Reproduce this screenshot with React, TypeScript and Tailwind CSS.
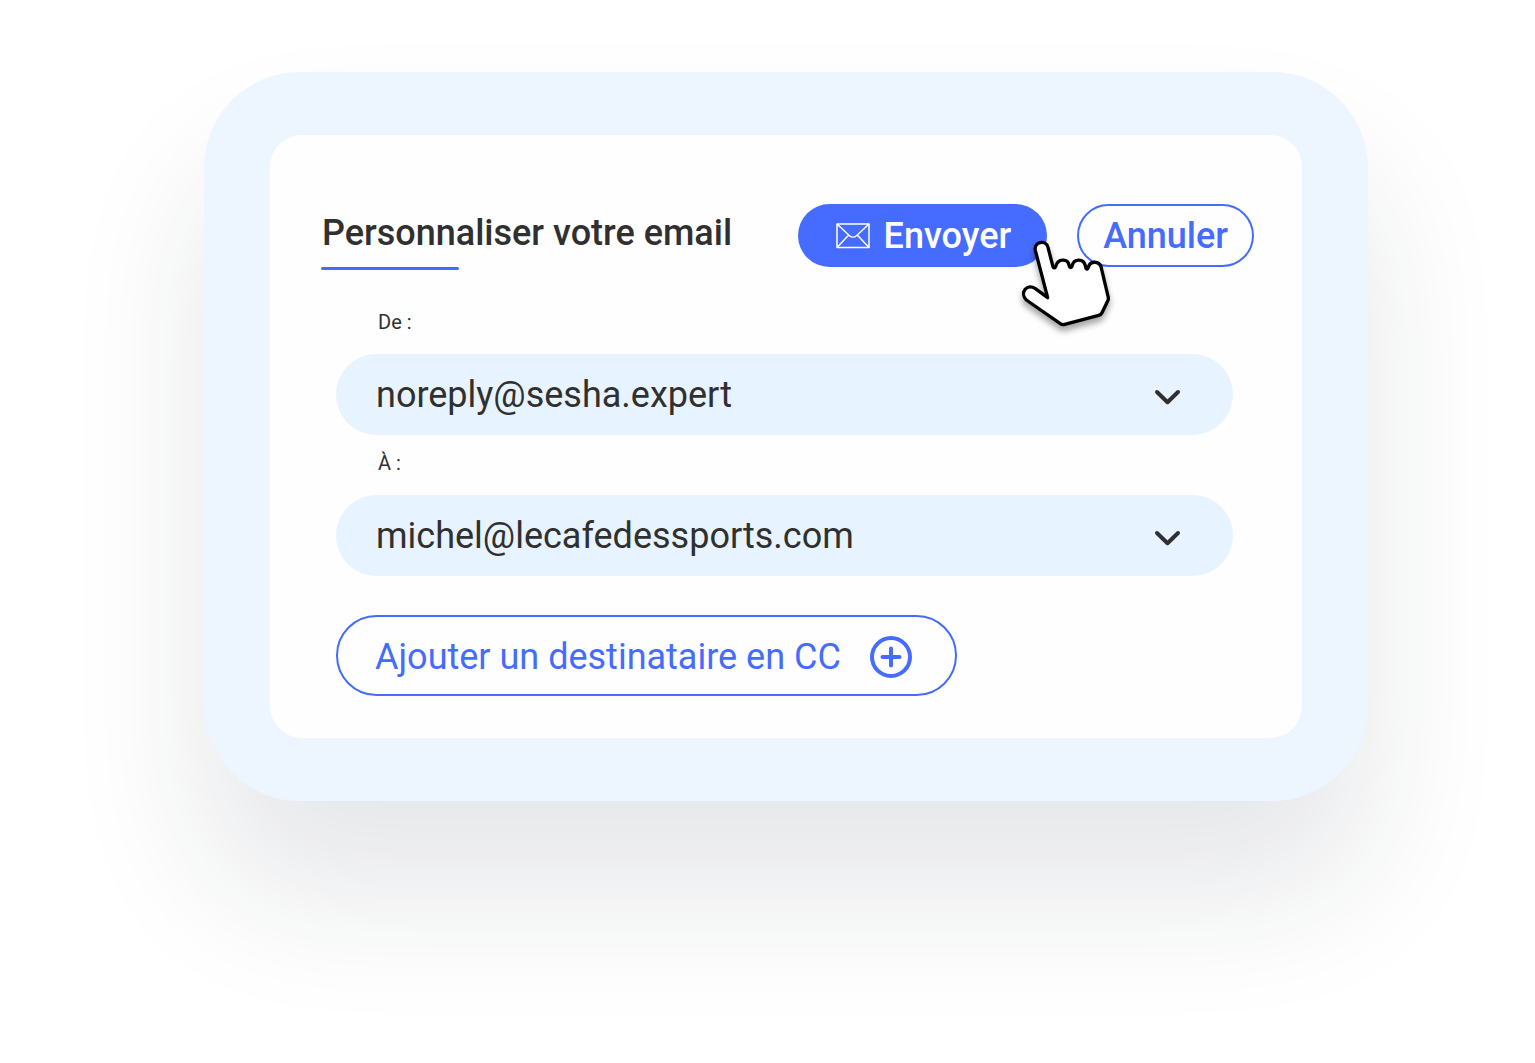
import { useState } from "react";

type SelectFieldProps = {
  id: string;
  label: string;
  options: string[];
};

function MailIcon() {
  return (
    <svg width="34" height="26" viewBox="0 0 34 26" fill="none" stroke="currentColor" strokeWidth="1.5" strokeLinejoin="round" aria-hidden="true">
      <rect x="1" y="1" width="32" height="23.5" />
      <path d="M1 1l12.5 11.7c2 1.8 5 1.8 7 0L33 1M1 24.5l11.5-12.2M33 24.5L21.5 12.3" />
    </svg>
  );
}

function ChevronIcon() {
  return (
    <svg
      className="pointer-events-none absolute right-[52px] top-1/2 -translate-y-1/2"
      width="27"
      height="21"
      viewBox="0 0 27 21"
      fill="none"
      stroke="#303030"
      strokeWidth="4"
      strokeLinecap="round"
      strokeLinejoin="round"
      aria-hidden="true"
    >
      <path d="M3 7.5l10.5 10.2L24 7.5" />
    </svg>
  );
}

function PlusCircleIcon() {
  return (
    <svg width="42" height="42" viewBox="0 0 42 42" fill="none" stroke="currentColor" strokeWidth="4" aria-hidden="true">
      <circle cx="21" cy="21" r="19" />
      <path d="M21 12.5v17M12.5 21h17" strokeLinecap="round" />
    </svg>
  );
}

function HandCursor() {
  return (
    <svg
      className="pointer-events-none absolute right-[139px] top-[31px] drop-shadow-[0_5px_3px_rgba(0,0,0,0.35)]"
      width="100"
      height="100"
      viewBox="0 0 300 300"
      fill="#fff"
      stroke="#000"
      strokeWidth="10"
      strokeLinejoin="round"
      aria-hidden="true"
    >
      <path d="M98 188L61 46C56 19 93 14 99 37L113 92C115 101 120 101 123 92C129 71 158 70 162 90C164 100 170 100 172 90C178 70 206 70 211 92C213 105 218 105 221 94C227 77 252 78 258 95L280 188Q281 193 278 198L261 233Q258 239 251 241L149 268Q142 270 136 266L34 195C14 175 33 145 60 160Z" />
    </svg>
  );
}

function SelectField({ id, label, options }: SelectFieldProps) {
  const [value, setValue] = useState(options[0]);

  return (
    <div>
      <label htmlFor={id} className="block pt-[13px] pb-[17px] pl-[42px] text-xl leading-[30px]">
        {label}
      </label>
      <div className="relative">
        <select
          id={id}
          value={value}
          onChange={e => setValue(e.target.value)}
          className="block h-[81px] w-full appearance-none rounded-full bg-[#e7f3ff] pr-24 pl-10 text-4xl"
        >
          {options.map(option => (
            <option key={option}>{option}</option>
          ))}
        </select>
        <ChevronIcon />
      </div>
    </div>
  );
}

export default function App() {
  return (
    <main className="min-h-screen bg-white pt-[72px] pr-[167px] pb-64 pl-[204px] font-[Roboto,sans-serif] text-[#303030]">
      <div className="rounded-[96px] bg-[#edf5ff] px-[66px] py-[63px] shadow-[0_92px_140px_rgba(24,32,56,0.11)]">
        <section className="rounded-[32px] bg-[#fefefe] pt-[69px] pr-12 pb-[42px] pl-[51px]">
          <header className="relative flex items-start justify-between gap-6">
            <div>
              <h1 className="pt-1 pl-px text-4xl leading-[50px] font-medium whitespace-nowrap">Personnaliser votre email</h1>
              <div className="mt-[9px] h-[3px] w-[138px] rounded-full bg-[#466bff]" />
            </div>
            <div className="flex shrink-0 gap-[30px]">
              <button
                type="button"
                className="flex h-[63px] items-center gap-3.5 rounded-full bg-[#466bff] pr-9 pl-[38px] text-4xl font-medium text-white"
              >
                <MailIcon />
                Envoyer
              </button>
              <button
                type="button"
                className="h-[63px] rounded-full border-2 border-[#466bff] px-6 text-4xl font-medium text-[#466bff]"
              >
                Annuler
              </button>
            </div>
            <HandCursor />
          </header>

          <div className="mt-6 pr-[21px] pl-[15px]">
            <SelectField id="from" label="De :" options={["noreply@sesha.expert"]} />
            <SelectField id="to" label="À :" options={["michel@lecafedessports.com"]} />
            <button
              type="button"
              className="mt-[39px] flex h-[81px] items-center gap-[29px] rounded-full border-2 border-[#466bff] pt-[3px] pr-[43px] pl-[37px] text-4xl text-[#466bff]"
            >
              Ajouter un destinataire en CC
              <PlusCircleIcon />
            </button>
          </div>
        </section>
      </div>
    </main>
  );
}
